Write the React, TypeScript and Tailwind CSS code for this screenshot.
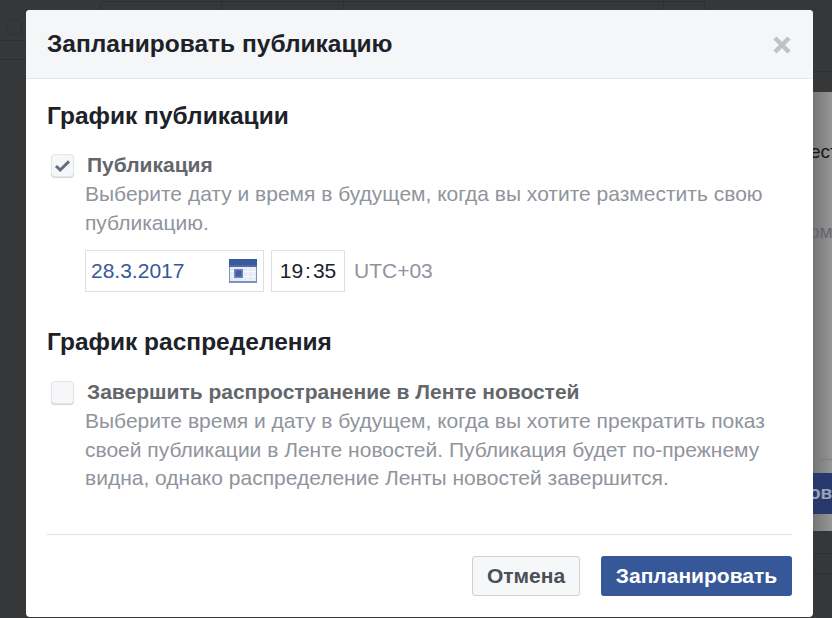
const sans = "font-['Liberation_Sans',Arial,sans-serif]";

function CalendarIcon() {
  return (
    <svg width="28" height="24" viewBox="0 0 28 24" className="shrink-0">
      <rect x="0" y="0" width="28" height="24" fill="#7d92bf" />
      <rect x="0" y="0" width="28" height="6" fill="#3b5a9d" />
      <rect x="0" y="6" width="28" height="2" fill="#4f6ca8" />
      <rect x="1" y="8" width="26" height="14" fill="#e6eaf4" />
      <path d="M1 12.5h26M1 17.5h26M14 8v14M19 8v14M24 8v14" stroke="#f6f8fc" strokeWidth="1" />
      <rect x="5" y="10" width="9" height="9" fill="#6c87bb" />
      <rect x="6.5" y="11.5" width="6" height="6" fill="#3f5f9f" />
    </svg>
  );
}

function Checkbox({ checked }: { checked?: boolean }) {
  return (
    <span className="mt-[1px] flex h-[23px] w-[23px] shrink-0 items-center justify-center rounded-[4px] border border-[#e3e5e8] bg-[#f6f7f9] shadow-[0_1px_1px_rgba(0,0,0,0.18)]">
      {checked && (
        <svg width="17" height="14" viewBox="0 0 17 14">
          <path d="M2 7 6.2 11 15 2.4" fill="none" stroke="#666d7d" strokeWidth="3" />
        </svg>
      )}
    </span>
  );
}

export default function App() {
  return (
    <div className={`relative h-[618px] w-[832px] overflow-hidden bg-[#363738] ${sans}`}>
      {/* page behind the dialog */}
      <div className="absolute left-[100px] top-[1px] flex h-[12px] w-[605px] rounded-t-[3px] border border-[#2e2f30]">
        <div className="w-[121px] border-r border-[#2e2f30]" />
        <div className="w-[122px] border-r border-[#2e2f30]" />
        <div className="flex-1 border-r border-[#2e2f30]" />
        <div className="w-[40px]" />
      </div>
      <div className="absolute left-[6px] top-[19px] h-[16px] w-[16px] rounded-full border border-[#2e2f30]" />
      <div className="absolute left-0 top-[40px] h-[20px] w-[26px] border-y border-[#2e2f30]" />
      <div className="absolute left-[813px] top-[71px] h-px w-[19px] bg-[#2e2f30]" />
      <div className="absolute left-[813px] top-[92px] h-[439px] w-[19px] overflow-hidden bg-gradient-to-r from-[#757575] to-[#969696]">
        <div className="absolute left-[-3px] top-[48px] whitespace-nowrap text-[19px] leading-[24px] text-[#15171b]">ест</div>
        <div className="absolute left-[-4px] top-[128px] whitespace-nowrap text-[19px] leading-[24px] text-[#64666a]">ом</div>
        <div className="absolute left-0 top-[367px] h-px w-full bg-[#7c7c7c]" />
        <div className="absolute left-0 top-[381px] flex h-[41px] w-full items-center overflow-hidden bg-[#27396a]">
          <span className="ml-[-4px] whitespace-nowrap text-[19px] font-bold text-[#9aa3b8]">ов</span>
        </div>
      </div>
      <div className="absolute left-[813px] top-[553px] h-[21px] w-[19px] border-y border-[#2e2f30]" />

      <div className="absolute left-[26px] top-[10px] flex h-[607px] w-[787px] flex-col overflow-hidden rounded-[4px] bg-white">
        <div className="flex h-[69px] shrink-0 items-center justify-between border-b border-[#e5e6e9] bg-[#f5f6f7] pl-[21px] pr-[21px]">
          <h1 className="text-[24.5px] font-bold text-[#1d2129]">Запланировать публикацию</h1>
          <svg width="20" height="20" viewBox="0 0 20 20" className="mt-[2px]">
            <path d="M3 3 17 17M17 3 3 17" stroke="#bec2c9" strokeWidth="4.5" />
          </svg>
        </div>

        <div className="flex flex-1 flex-col px-[21px]">
          <h2 className="mt-[22px] text-[24.5px] font-bold leading-[30px] text-[#1d2129]">График публикации</h2>

          <div className="mt-[22px] flex items-start gap-[13px] pl-[4px]">
            <Checkbox checked />
            <div className="min-w-0">
              <div className="text-[21px] font-bold leading-[24px] text-[#63666b]">Публикация</div>
              <p className="ml-[-2px] mt-[3px] w-[706px] text-[21px] leading-[28.5px] text-[#90949c]">
                Выберите дату и время в будущем, когда вы хотите разместить свою публикацию.
              </p>
              <div className="ml-[-2px] mt-[13px] flex items-center gap-[7px]">
                <div className="flex h-[42px] w-[179px] items-center justify-between border border-[#dddfe2] pl-[5px] pr-[6px] text-[21px] text-[#365899]">
                  28.3.2017
                  <CalendarIcon />
                </div>
                <div className="flex h-[42px] w-[74px] items-center justify-center border border-[#dddfe2] text-[21px] text-[#1d2129]">
                  19<span className="mx-[2px]">:</span>35
                </div>
                <span className="ml-[2px] text-[21px] text-[#90949c]">UTC+03</span>
              </div>
            </div>
          </div>

          <h2 className="mt-[35px] text-[24.5px] font-bold leading-[30px] text-[#1d2129]">График распределения</h2>

          <div className="mt-[23px] flex items-start gap-[13px] pl-[4px]">
            <Checkbox />
            <div className="min-w-0">
              <div className="text-[21px] font-bold leading-[24px] text-[#63666b]">Завершить распространение в Ленте новостей</div>
              <p className="ml-[-2px] mt-[3px] w-[706px] text-[21px] leading-[28.5px] text-[#90949c]">
                Выберите время и дату в будущем, когда вы хотите прекратить показ своей публикации в Ленте новостей. Публикация будет по-прежнему видна, однако распределение Ленты новостей завершится.
              </p>
            </div>
          </div>

          <div className="mt-auto flex h-[83px] items-start justify-end gap-[21px] border-t border-[#dddfe2] pt-[21px]">
            <button className="h-[40px] w-[108px] rounded-[3px] border border-[#ced0d4] bg-[#f6f7f9] text-[21px] font-bold text-[#4b4f56]">Отмена</button>
            <button className="h-[40px] w-[191px] rounded-[3px] bg-[#365899] text-[21px] font-bold text-white">Запланировать</button>
          </div>
        </div>
      </div>
    </div>
  );
}
